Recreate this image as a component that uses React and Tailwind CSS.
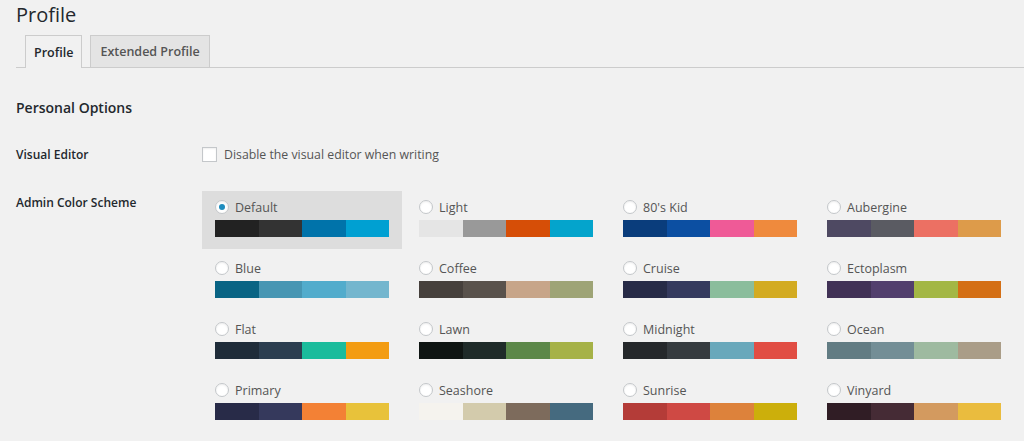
import React from "react";

const schemes = [
  { name: "Default", colors: ["#222222", "#333333", "#0073aa", "#00a0d2"], selected: true },
  { name: "Light", colors: ["#e5e5e5", "#999999", "#d64e07", "#04a4cc"] },
  { name: "80's Kid", colors: ["#0a3d7c", "#0c4fa2", "#ef5a97", "#ef8a3d"] },
  { name: "Aubergine", colors: ["#4e4962", "#5a5b62", "#ec7063", "#dd9b4a"] },
  { name: "Blue", colors: ["#096484", "#4796b3", "#52accc", "#74b6ce"] },
  { name: "Coffee", colors: ["#46403c", "#59524c", "#c7a589", "#9ea476"] },
  { name: "Cruise", colors: ["#272b47", "#353a5e", "#8bbd9c", "#d3ab21"] },
  { name: "Ectoplasm", colors: ["#413256", "#523f6d", "#a3b745", "#d46f15"] },
  { name: "Flat", colors: ["#1f2c39", "#2c3e50", "#1abc9c", "#f39c12"] },
  { name: "Lawn", colors: ["#0f1513", "#1f2b29", "#5c8849", "#a6b247"] },
  { name: "Midnight", colors: ["#25282b", "#363b3f", "#69a8bb", "#e14d43"] },
  { name: "Ocean", colors: ["#627c83", "#738e96", "#9ebaa0", "#aa9d88"] },
  { name: "Primary", colors: ["#282b48", "#35395c", "#f38135", "#e8c23a"] },
  { name: "Seashore", colors: ["#f5f3ee", "#d3cbac", "#7d6b5c", "#456a7f"] },
  { name: "Sunrise", colors: ["#b43c38", "#cf4944", "#dd823b", "#ccaf0b"] },
  { name: "Vinyard", colors: ["#301d25", "#452b35", "#d39a5f", "#eabc3e"] },
];

function Radio({ checked }) {
  return (
    <span className="flex h-[14px] w-[14px] items-center justify-center rounded-full border border-[#c4c7ca] bg-white shadow-[inset_0_1px_2px_rgba(0,0,0,0.07)]">
      {checked && <span className="h-[6px] w-[6px] rounded-full bg-[#1e8cbe]" />}
    </span>
  );
}

function Option({ scheme }) {
  return (
    <div
      className={
        "flex flex-col px-[13px] pt-[8px] pb-[12px] " +
        (scheme.selected ? "bg-[#dddddd]" : "")
      }
    >
      <div className="flex h-[16px] items-center gap-[6px]">
        <Radio checked={scheme.selected} />
        <span className="mt-[2px] text-[12.5px] leading-[16px] text-[#555]">{scheme.name}</span>
      </div>
      <div className="mt-[5px] flex h-[17px]">
        {scheme.colors.map((c, i) => (
          <div key={i} className="h-full flex-1" style={{ backgroundColor: c }} />
        ))}
      </div>
    </div>
  );
}

export default function App() {
  return (
    <div className="min-h-[441px] bg-[#f1f1f1] pl-4 font-['Open_Sans',sans-serif] text-[#444]">
      <h1 className="text-[20px] leading-[29px] font-normal text-[#23282d]">Profile</h1>
      <div className="mt-[6px] flex h-[33px] gap-[8px] border-b border-[#cccccc] pl-[9px]">
        <div className="-mb-px flex h-[33px] items-center border border-b-0 border-[#cccccc] bg-[#f1f1f1] px-[8px] pt-[2px] text-[12.5px] font-semibold text-[#23282d]">
          Profile
        </div>
        <div className="flex h-[32px] items-center border border-b-0 border-[#cccccc] bg-[#e4e4e4] px-[9px] pt-[2px] text-[12.5px] font-semibold text-[#555]">
          Extended Profile
        </div>
      </div>
      <h2 className="mt-[30px] text-[14px] leading-[20px] font-semibold text-[#23282d]">Personal Options</h2>
      <div className="mt-[26px] flex h-[20px] items-center">
        <div className="mt-[2px] w-[186px] text-[12px] leading-[20px] font-semibold text-[#23282d]">Visual Editor</div>
        <div className="flex items-center gap-[7px]">
          <span className="h-[15px] w-[15px] border border-[#c4c7ca] bg-white shadow-[inset_0_1px_2px_rgba(0,0,0,0.07)]" />
          <span className="mt-[1px] text-[12.3px] leading-[20px] text-[#555]">Disable the visual editor when writing</span>
        </div>
      </div>
      <div className="mt-[27px] flex">
        <div className="w-[186px] pt-[2px] text-[12px] leading-[20px] font-semibold text-[#23282d]">Admin Color Scheme</div>
        <div className="grid grid-cols-[repeat(4,200px)] gap-x-[4px] gap-y-[3px]">
          {schemes.map((s) => (
            <Option key={s.name} scheme={s} />
          ))}
        </div>
      </div>
    </div>
  );
}
